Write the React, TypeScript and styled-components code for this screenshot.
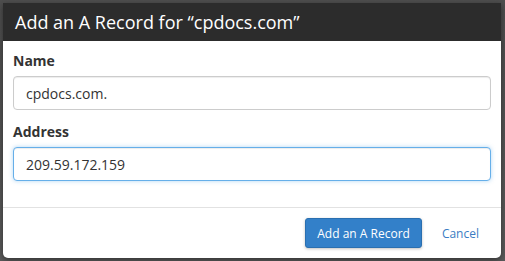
import styled, { createGlobalStyle } from "styled-components";

const GlobalStyle = createGlobalStyle`
	html, body {
		margin: 0;
		padding: 0;
		background: #575757;
	}
	body {
		font-family: "Open Sans", "Liberation Sans", sans-serif;
		width: 505px;
		height: 261px;
		overflow: hidden;
	}
`;

const Backdrop = styled.div`
	width: 505px;
	height: 261px;
	padding: 3px 4px 3px 3px;
	box-sizing: border-box;
	background: linear-gradient(#4e4e4e, #5a5a5a);
`;

const Dialog = styled.div`
	display: flex;
	flex-direction: column;
	height: 255px;
	background: #ffffff;
	border-radius: 0 0 5px 5px;
	box-shadow: 0 2px 6px rgba(0, 0, 0, 0.45);
	overflow: hidden;
`;

const Header = styled.div`
	display: flex;
	align-items: center;
	height: 38px;
	padding: 0 12px;
	background: #2c2c2c;
	color: #ffffff;
	font-size: 18px;
	line-height: 38px;
`;

const Body = styled.div`
	padding: 10px 10px 26px;
	border-bottom: 1px solid #e2e2e2;
`;

const Group = styled.div<{ $last?: boolean }>`
	display: flex;
	flex-direction: column;
	margin-bottom: ${({ $last }) => ($last ? 0 : "12px")};
`;

const Label = styled.label`
	font-size: 14px;
	font-weight: 700;
	line-height: 20px;
	color: #333333;
	margin-bottom: 5px;
`;

const Field = styled.input<{ $focused?: boolean }>`
	box-sizing: border-box;
	height: 34px;
	width: 100%;
	padding: 0 12px;
	font-family: inherit;
	font-size: 14px;
	color: #333333;
	background: #ffffff;
	border-radius: 4px;
	outline: none;
	border: 1px solid ${({ $focused }) => ($focused ? "#66afe9" : "#cccccc")};
	box-shadow: ${({ $focused }) =>
		$focused
			? "inset 0 1px 1px rgba(0,0,0,.075), 0 0 4px rgba(102,175,233,.5)"
			: "inset 0 1px 1px rgba(0,0,0,.075)"};
`;

const Footer = styled.div`
	display: flex;
	justify-content: flex-end;
	align-items: center;
	gap: 8px;
	padding: 10px 10px 9px;
`;

const PrimaryButton = styled.button`
	height: 30px;
	padding: 0 11px;
	font-family: inherit;
	font-size: 12px;
	color: #ffffff;
	background: #3380c9;
	border: 1px solid #2a6fb0;
	border-radius: 3px;
	box-shadow: 0 1px 3px rgba(0, 0, 0, 0.25);
`;

const LinkButton = styled.button`
	height: 30px;
	padding: 0 12px;
	font-family: inherit;
	font-size: 12px;
	color: #3a7cc3;
	background: none;
	border: none;
`;

export default function App() {
	return (
		<>
			<GlobalStyle />
			<Backdrop>
				<Dialog>
					<Header>Add an A Record for “cpdocs.com”</Header>
					<Body>
						<Group>
							<Label>Name</Label>
							<Field defaultValue="cpdocs.com." />
						</Group>
						<Group $last>
							<Label>Address</Label>
							<Field $focused defaultValue="209.59.172.159" />
						</Group>
					</Body>
					<Footer>
						<PrimaryButton>Add an A Record</PrimaryButton>
						<LinkButton>Cancel</LinkButton>
					</Footer>
				</Dialog>
			</Backdrop>
		</>
	);
}
